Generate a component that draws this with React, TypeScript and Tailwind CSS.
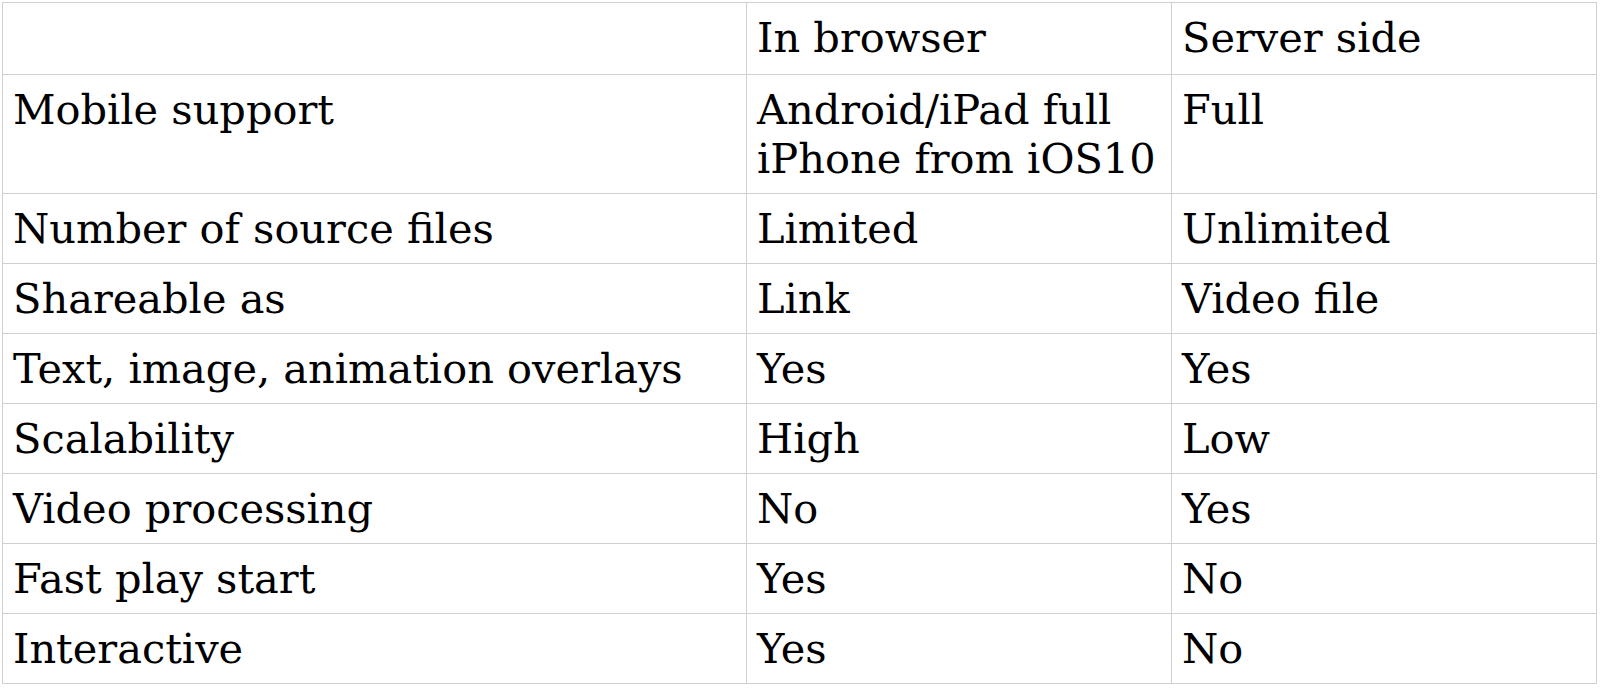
const rows: [string, string[], string][] = [
  ['Mobile support', ['Android/iPad full', 'iPhone from iOS10'], 'Full'],
  ['Number of source files', ['Limited'], 'Unlimited'],
  ['Shareable as', ['Link'], 'Video file'],
  ['Text, image, animation overlays', ['Yes'], 'Yes'],
  ['Scalability', ['High'], 'Low'],
  ['Video processing', ['No'], 'Yes'],
  ['Fast play start', ['Yes'], 'No'],
  ['Interactive', ['Yes'], 'No'],
];

export default function App() {
  const cell = 'border border-[#d0d0d0] px-[10px] py-[10px] align-top text-left font-normal';

  return (
    <div className="min-h-screen bg-white pt-[2px] pl-[2px] text-black [font-family:'DejaVu_Serif',serif] text-[41.5px] leading-[49px]">
      <table className="w-[1594px] table-fixed border-collapse">
        <colgroup>
          <col className="w-[744px]" />
          <col className="w-[425px]" />
          <col className="w-[425px]" />
        </colgroup>
        <thead>
          <tr>
            <th className={`${cell} h-[72px]`}></th>
            <th className={`${cell} h-[72px]`}>In browser</th>
            <th className={`${cell} h-[72px]`}>Server side</th>
          </tr>
        </thead>
        <tbody>
          {rows.map(([label, browser, server]) => (
            <tr key={label}>
              <td className={cell}>{label}</td>
              <td className={cell}>
                {browser.map((line) => (
                  <div key={line}>{line}</div>
                ))}
              </td>
              <td className={cell}>{server}</td>
            </tr>
          ))}
        </tbody>
      </table>
    </div>
  );
}
